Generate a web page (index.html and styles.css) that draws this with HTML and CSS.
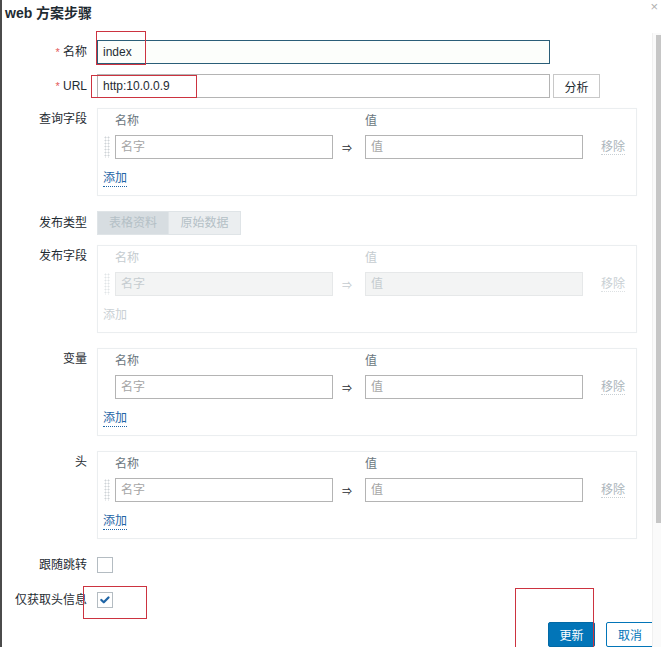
FILE: index.html
```html
<!DOCTYPE html>
<html lang="zh">
<head>
<meta charset="utf-8">
<title>web 方案步骤</title>
<link rel="stylesheet" href="styles.css">
</head>
<body>
<div class="dialog">
  <div class="header">
    <span class="title">web 方案步骤</span>
    <span class="close">×</span>
  </div>

  <div class="form">
    <div class="row r-name">
      <label class="lbl"><span class="req">*</span> 名称</label>
      <div class="field"><input class="text focus wide" type="text" value="index"></div>
    </div>

    <div class="row r-url">
      <label class="lbl"><span class="req">*</span> URL</label>
      <div class="field inline">
        <input class="text wide" type="text" value="http:10.0.0.9">
        <button class="btn-plain">分析</button>
      </div>
    </div>

    <div class="row r-box">
      <label class="lbl top">查询字段</label>
      <div class="box">
        <div class="grid head"><span></span><span>名称</span><span></span><span>值</span><span></span></div>
        <div class="grid pair">
          <span class="drag"></span>
          <input class="text cell" type="text" placeholder="名字">
          <span class="arrow">⇒</span>
          <input class="text cell" type="text" placeholder="值">
          <span class="remove">移除</span>
        </div>
        <a class="add">添加</a>
      </div>
    </div>

    <div class="row r-type">
      <label class="lbl">发布类型</label>
      <div class="seg">
        <span class="seg-item on">表格资料</span><span class="seg-item">原始数据</span>
      </div>
    </div>

    <div class="row r-box2">
      <label class="lbl top">发布字段</label>
      <div class="box disabled">
        <div class="grid head"><span></span><span>名称</span><span></span><span>值</span><span></span></div>
        <div class="grid pair">
          <span class="drag"></span>
          <input class="text cell" type="text" placeholder="名字" disabled>
          <span class="arrow">⇒</span>
          <input class="text cell" type="text" placeholder="值" disabled>
          <span class="remove">移除</span>
        </div>
        <a class="add">添加</a>
      </div>
    </div>

    <div class="row r-box3">
      <label class="lbl top">变量</label>
      <div class="box">
        <div class="grid head"><span></span><span>名称</span><span></span><span>值</span><span></span></div>
        <div class="grid pair">
          <span class="nodrag"></span>
          <input class="text cell" type="text" placeholder="名字">
          <span class="arrow">⇒</span>
          <input class="text cell" type="text" placeholder="值">
          <span class="remove">移除</span>
        </div>
        <a class="add">添加</a>
      </div>
    </div>

    <div class="row r-box3">
      <label class="lbl top">头</label>
      <div class="box">
        <div class="grid head"><span></span><span>名称</span><span></span><span>值</span><span></span></div>
        <div class="grid pair">
          <span class="drag"></span>
          <input class="text cell" type="text" placeholder="名字">
          <span class="arrow">⇒</span>
          <input class="text cell" type="text" placeholder="值">
          <span class="remove">移除</span>
        </div>
        <a class="add">添加</a>
      </div>
    </div>

    <div class="row r-chk1">
      <label class="lbl chk-lbl">跟随跳转</label>
      <span class="chk"></span>
    </div>

    <div class="row r-chk2">
      <label class="lbl chk-lbl">仅获取头信息</label>
      <span class="chk">
        <svg viewBox="0 0 16 16" width="16" height="16"><path d="M3.8 8 L6.6 10.6 L12 5.2" fill="none" stroke="#1f65a6" stroke-width="2.6" stroke-linecap="round" stroke-linejoin="round"/></svg>
      </span>
    </div>

    <div class="footer">
      <button class="btn-primary">更新</button>
      <button class="btn-secondary">取消</button>
    </div>
  </div>

  <div class="scrollbar"><div class="thumb"></div></div>

  <div class="mark m1"></div>
  <div class="mark m2"></div>
  <div class="mark m3"></div>
  <div class="mark m4"></div>
</div>
</body>
</html>
```

FILE: styles.css
```css
* { box-sizing: border-box; }

html, body {
  margin: 0;
  padding: 0;
  background: #ffffff;
}

body {
  font-family: "Liberation Sans", "Noto Sans CJK SC", sans-serif;
  font-size: 12px;
  color: #1f2c33;
  overflow: hidden;
}

.dialog {
  position: relative;
  width: 661px;
  height: 647px;
  border-left: 2px solid #4b4b4b;
  overflow: hidden;
}

.header {
  display: flex;
  justify-content: space-between;
  align-items: flex-start;
  height: 26px;
  padding-left: 3px;
}

.title {
  font-size: 14px;
  font-weight: bold;
  line-height: 26px;
  color: #1f2c33;
}

.close {
  font-size: 13px;
  line-height: 12px;
  color: #b0b0b0;
  margin-right: 3px;
  margin-top: 1px;
}

.form {
  display: flex;
  flex-direction: column;
  padding-top: 14px;
}

.row {
  display: flex;
  align-items: flex-start;
}

.r-url { margin-top: 10px; }
.r-box { margin-top: 10px; }
.r-type { margin-top: 15px; }
.r-box2 { margin-top: 10px; }
.r-box3 { margin-top: 15px; }
.r-chk1 { margin-top: 18px; }
.r-chk2 { margin-top: 19px; }

.lbl {
  width: 85px;
  flex: none;
  margin-right: 10px;
  text-align: right;
  line-height: 24px;
  white-space: nowrap;
  color: #1f2c33;
}

.lbl.top {
  line-height: 16px;
  padding-top: 3px;
}

.lbl.chk-lbl {
  line-height: 16px;
}

.req {
  color: #e45959;
  font-size: 11px;
}

.field.inline {
  display: flex;
  gap: 3px;
}

.text {
  height: 24px;
  border: 1px solid #b4b4b4;
  background: #ffffff;
  font-family: "Liberation Sans", "Noto Sans CJK SC", sans-serif;
  font-size: 12px;
  color: #1f2c33;
  padding: 0 5px;
  margin: 0;
  outline: none;
}

.text::placeholder { color: #a5a5a5; }

.wide { width: 453px; }

.focus {
  border-color: #2a5e78;
  background: #fcfefb;
}

.btn-plain {
  width: 47px;
  height: 24px;
  border: 1px solid #c8c8c8;
  background: #ffffff;
  font-family: "Liberation Sans", "Noto Sans CJK SC", sans-serif;
  font-size: 12px;
  color: #1f2c33;
  padding: 0;
}

.box {
  width: 540px;
  height: 88px;
  border: 1px solid #ebeef0;
  box-shadow: 0 0 1px rgba(0,0,0,0.04);
  padding: 4px 0 0 5px;
  display: flex;
  flex-direction: column;
}

.grid {
  display: grid;
  grid-template-columns: 12px 218px 32px 218px auto;
  align-items: center;
}

.head {
  line-height: 16px;
  color: #6b7780;
}

.pair {
  margin-top: 6px;
  height: 24px;
}

.cell { width: 218px; }

.drag {
  width: 6px;
  height: 22px;
  margin-left: 1px;
  background-image: radial-gradient(circle, #cfd4d7 0.9px, transparent 1.1px);
  background-size: 3px 3px;
}

.nodrag { width: 6px; height: 22px; }

.arrow {
  text-align: center;
  color: #1f2c33;
  font-size: 10px;
  padding-right: 4px;
}

.remove {
  margin-left: 18px;
  color: #acb5bb;
  border-bottom: 1px dotted #c9d0d4;
  line-height: 14px;
  justify-self: start;
}

.add {
  align-self: flex-start;
  margin-top: 12px;
  color: #1f65a6;
  line-height: 15px;
  border-bottom: 1px dotted #1f65a6;
  cursor: pointer;
}

.disabled .head { color: #c5ccd0; }
.disabled .text {
  background: #f3f4f4;
  border-color: #e6e8e9;
}
.disabled .text::placeholder { color: #c5ccd0; }
.disabled .arrow { color: #c5ccd0; }
.disabled .remove { color: #c9d0d4; border-bottom-color: #dde1e3; }
.disabled .add { color: #c9d0d4; border-bottom-color: transparent; }
.disabled .drag {
  background-image: radial-gradient(circle, #e1e5e7 0.9px, transparent 1.1px);
}

.seg {
  display: flex;
  height: 24px;
  border: 1px solid #dfe4e7;
}

.seg-item {
  width: 71px;
  line-height: 22px;
  text-align: center;
  color: #b4c0c6;
  background: #ebeef0;
}

.seg-item.on {
  background: #d7dde1;
  border-right: 1px solid #dfe4e7;
}

.chk {
  width: 16px;
  height: 16px;
  border: 1px solid #b4bcc2;
  background: #ffffff;
  display: flex;
  align-items: center;
  justify-content: center;
}

.chk svg { display: block; }

.footer {
  display: flex;
  justify-content: flex-end;
  gap: 11px;
  margin-top: 14px;
  padding-right: 7px;
}

.btn-primary,
.btn-secondary {
  height: 25px;
  font-family: "Liberation Sans", "Noto Sans CJK SC", sans-serif;
  font-size: 12px;
  padding: 0;
  border-radius: 2px;
}

.btn-primary {
  width: 47px;
  background: #0275b8;
  border: 1px solid #0269a5;
  color: #ffffff;
}

.btn-secondary {
  width: 48px;
  background: #ffffff;
  border: 1px solid #0275b8;
  color: #0275b8;
}

.scrollbar {
  position: absolute;
  right: 0;
  top: 33px;
  bottom: 0;
  width: 9px;
  border-left: 1px solid #f0f0f0;
  background: #fafafa;
}

.thumb {
  margin-left: 3px;
  margin-top: 2px;
  width: 5px;
  height: 488px;
  background: #c6c6c6;
}

.mark {
  position: absolute;
  border: 1px solid #cc3340;
  pointer-events: none;
}

.m1 { left: 94px; top: 31px; width: 50px; height: 34px; }
.m2 { left: 89px; top: 75px; width: 106px; height: 23px; }
.m3 { left: 81px; top: 586px; width: 64px; height: 33px; }
.m4 { left: 513px; top: 588px; width: 79px; height: 62px; }
```
